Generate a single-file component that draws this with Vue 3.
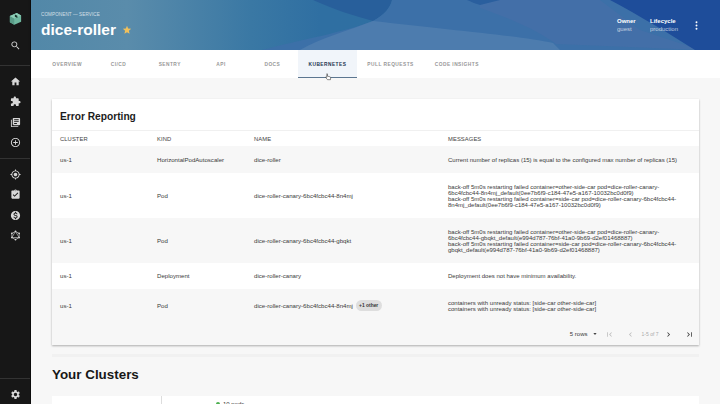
<template>
  <div class="page">
    <nav class="sidebar">
      <div class="logo">
        <svg viewBox="0 0 24 24" width="15" height="15">
          <polygon points="3,8 14,3 21,7 21,17 10,22 3,18" fill="#6fb8a0" />
          <polygon points="3,8 10,12 10,22 3,18" fill="#5a9c88" />
          <polygon points="3,8 14,3 21,7 10,12" fill="#8ccdb6" />
          <polygon points="11,5.5 15,7.5 15,11 11,9" fill="#16352e" />
        </svg>
      </div>
      <button class="side-btn search"><svg viewBox="0 0 24 24"><path :d="icons.search" /></svg></button>
      <div class="side-line"></div>
      <button v-for="name in groupOne" :key="name" class="side-btn"><svg viewBox="0 0 24 24"><path :d="icons[name]" /></svg></button>
      <div class="side-line second"></div>
      <button v-for="name in groupTwo" :key="name" class="side-btn"><svg viewBox="0 0 24 24"><path :d="icons[name]" /></svg></button>
      <button class="side-btn">
        <svg viewBox="0 0 24 24" class="graph">
          <polygon points="12,3 20,7.5 20,16.5 12,21 4,16.5 4,7.5" />
          <polygon points="12,3 20,16.5 4,16.5" />
          <circle cx="12" cy="3" r="1.8" /><circle cx="20" cy="7.5" r="1.8" /><circle cx="20" cy="16.5" r="1.8" />
          <circle cx="12" cy="21" r="1.8" /><circle cx="4" cy="16.5" r="1.8" /><circle cx="4" cy="7.5" r="1.8" />
        </svg>
      </button>
      <div class="side-bottom">
        <div class="side-line"></div>
        <button class="side-btn"><svg viewBox="0 0 24 24"><path :d="icons.settings" /></svg></button>
      </div>
    </nav>

    <main class="main">
      <header class="hero">
        <svg class="hero-bg" viewBox="31 0 689 50" preserveAspectRatio="none">
          <defs>
            <linearGradient id="base" x1="0" x2="1" y1="0" y2="0">
              <stop offset="0" stop-color="#5288a8" />
              <stop offset="0.14" stop-color="#5a8cab" />
              <stop offset="0.32" stop-color="#3a78a4" />
              <stop offset="0.42" stop-color="#2f6fa2" />
              <stop offset="1" stop-color="#2f70a2" />
            </linearGradient>
          </defs>
          <rect x="31" y="0" width="689" height="50" fill="url(#base)" />
          <path d="M313 0 C 335 10 355 16 373 21 C 385 14 390 8 392 0 Z" fill="#285f9b" />
          <path d="M392 0 L 720 0 L 720 50 L 262 50 C 300 40 345 32 373 21 C 385 14 390 8 392 0 Z" fill="#3c70a8" />
          <path d="M373 21 C 450 30 520 36 553 43 L 560 50 L 300 50 C 320 38 350 30 373 21 Z" fill="#4d7cae" />
          <path d="M480 8 C 515 20 540 32 556 44 L 700 50 L 640 30 L 600 0 L 480 0 Z" fill="#436fa8" />
          <path d="M610 0 C 640 16 670 34 695 50 L 720 50 L 720 0 Z" fill="#1e4d9a" />
          <path d="M467 0 C 472 2 476 4 480 5 L 500 0 Z" fill="#2a5f9e" />
        </svg>
        <div class="hero-left">
          <div class="crumb">COMPONENT — SERVICE</div>
          <h1 class="title">dice-roller
            <svg class="star" viewBox="0 0 24 24"><path :d="icons.star" /></svg>
          </h1>
        </div>
        <div class="hero-right">
          <div class="meta"><b>Owner</b><span>guest</span></div>
          <div class="meta"><b>Lifecycle</b><span>production</span></div>
          <svg class="kebab" viewBox="0 0 4 14"><circle cx="2" cy="2" r="1.5" /><circle cx="2" cy="7" r="1.5" /><circle cx="2" cy="12" r="1.5" /></svg>
        </div>
      </header>

      <div class="tabs">
        <div v-for="tab in tabs" :key="tab" :class="['tab', { active: tab === 'KUBERNETES' }]">{{ tab }}</div>
        <svg class="cursor" viewBox="0 0 12 14">
          <path d="M3.2 1.2c.7 0 1 .5 1 1v3.4l4.3 1c.9.2 1.4.8 1.3 1.7l-.4 3.4H4.3L1 7.8c-.4-.6.3-1.3 1-.9l1 .8V2.2c0-.5-.4-1 .2-1z" fill="#fff" stroke="#222" stroke-width="0.9" />
        </svg>
      </div>

      <section class="content">
        <div class="card">
          <h2 class="card-title">Error Reporting</h2>
          <table class="errors">
            <thead>
              <tr>
                <th class="c1">CLUSTER</th>
                <th class="c2">KIND</th>
                <th class="c3">NAME</th>
                <th>MESSAGES</th>
              </tr>
            </thead>
            <tbody>
              <tr v-for="(row, i) in rows" :key="i" :class="{ last: i === rows.length - 1 }" :style="{ height: row.h + 'px' }">
                <td>{{ row.cluster }}</td>
                <td>{{ row.kind }}</td>
                <td>
                  {{ row.name }}
                  <span v-if="row.extra" class="chip">{{ row.extra }}</span>
                </td>
                <td class="msg"><div v-for="line in row.messages" :key="line">{{ line }}</div></td>
              </tr>
            </tbody>
          </table>
          <div class="pager">
            <span class="rows">5 rows</span>
            <svg class="caret" viewBox="0 0 10 5"><path d="M1 0h8L5 5z" /></svg>
            <svg class="pg off first" viewBox="0 0 24 24"><path :d="icons.first" /></svg>
            <svg class="pg off prev" viewBox="0 0 24 24"><path :d="icons.prev" /></svg>
            <span class="count">1-5 of 7</span>
            <svg class="pg next" viewBox="0 0 24 24"><path :d="icons.next" /></svg>
            <svg class="pg last-btn" viewBox="0 0 24 24"><path :d="icons.last" /></svg>
          </div>
        </div>

        <div class="band"></div>
        <h2 class="clusters-title">Your Clusters</h2>
        <div class="cluster-card">
          <div class="cluster-name">us-1</div>
          <div class="cluster-stat"><i class="dot"></i>10 pods</div>
        </div>
      </section>
    </main>
  </div>
</template>

<script setup>
const icons = {
  search: 'M15.5 14h-.79l-.28-.27C15.41 12.59 16 11.11 16 9.5 16 5.91 13.09 3 9.5 3S3 5.91 3 9.5 5.91 16 9.5 16c1.61 0 3.09-.59 4.23-1.57l.27.28v.79l5 4.99L20.49 19l-4.99-5zm-6 0C7.01 14 5 11.99 5 9.5S7.01 5 9.5 5 14 7.01 14 9.5 11.99 14 9.5 14z',
  home: 'M10 20v-6h4v6h5v-8h3L12 3 2 12h3v8z',
  extension: 'M20.5 11H19V7c0-1.1-.9-2-2-2h-4V3.5C13 2.12 11.88 1 10.5 1S8 2.12 8 3.5V5H4c-1.1 0-1.99.9-1.99 2v3.8H3.5c1.49 0 2.7 1.21 2.7 2.7s-1.21 2.7-2.7 2.7H2V20c0 1.1.9 2 2 2h3.8v-1.5c0-1.49 1.21-2.7 2.7-2.7 1.49 0 2.7 1.21 2.7 2.7V22H17c1.1 0 2-.9 2-2v-4h1.5c1.38 0 2.5-1.12 2.5-2.5S21.88 11 20.5 11z',
  books: 'M4 6H2v14c0 1.1.9 2 2 2h14v-2H4V6zm16-4H8c-1.1 0-2 .9-2 2v12c0 1.1.9 2 2 2h12c1.1 0 2-.9 2-2V4c0-1.1-.9-2-2-2zm-1 9H9V9h10v2zm-4 4H9v-2h6v2zm4-8H9V5h10v2z',
  add: 'M13 7h-2v4H7v2h4v4h2v-4h4v-2h-4V7zm-1-5C6.48 2 2 6.48 2 12s4.48 10 10 10 10-4.48 10-10S17.52 2 12 2zm0 18c-4.41 0-8-3.59-8-8s3.59-8 8-8 8 3.59 8 8-3.59 8-8 8z',
  target: 'M12 8c-2.21 0-4 1.79-4 4s1.79 4 4 4 4-1.79 4-4-1.79-4-4-4zm8.94 3c-.46-4.17-3.77-7.48-7.94-7.94V1h-2v2.06C6.83 3.52 3.52 6.83 3.06 11H1v2h2.06c.46 4.17 3.77 7.48 7.94 7.94V23h2v-2.06c4.17-.46 7.48-3.77 7.94-7.94H23v-2h-2.06zM12 19c-3.87 0-7-3.13-7-7s3.13-7 7-7 7 3.13 7 7-3.13 7-7 7z',
  assignment: 'M19 3h-4.18C14.4 1.84 13.3 1 12 1c-1.3 0-2.4.84-2.82 2H5c-1.1 0-2 .9-2 2v14c0 1.1.9 2 2 2h14c1.1 0 2-.9 2-2V5c0-1.1-.9-2-2-2zm-7 0c.55 0 1 .45 1 1s-.45 1-1 1-1-.45-1-1 .45-1 1-1zm-2 14l-4-4 1.41-1.41L10 14.17l6.59-6.59L18 9l-8 8z',
  money: 'M12 2C6.48 2 2 6.48 2 12s4.48 10 10 10 10-4.48 10-10S17.52 2 12 2zm1.41 16.09V20h-2.67v-1.93c-1.71-.36-3.16-1.46-3.27-3.4h1.96c.1 1.05.82 1.87 2.65 1.87 1.96 0 2.4-.98 2.4-1.59 0-.83-.44-1.61-2.67-2.14-2.48-.6-4.18-1.62-4.18-3.67 0-1.72 1.39-2.84 3.11-3.21V4h2.67v1.95c1.86.45 2.79 1.86 2.87 3.39H14.3c-.05-1.11-.64-1.87-2.22-1.87-1.5 0-2.4.68-2.4 1.64 0 .84.65 1.39 2.67 1.91s4.18 1.39 4.18 3.91c-.01 1.83-1.38 2.83-3.12 3.16z',
  settings: 'M19.14 12.94c.04-.3.06-.61.06-.94 0-.32-.02-.64-.07-.94l2.03-1.58c.18-.14.23-.41.12-.61l-1.92-3.32c-.12-.22-.37-.29-.59-.22l-2.39.96c-.5-.38-1.03-.7-1.62-.94l-.36-2.54c-.04-.24-.24-.41-.48-.41h-3.84c-.24 0-.43.17-.47.41l-.36 2.54c-.59.24-1.13.57-1.62.94l-2.39-.96c-.22-.08-.47 0-.59.22L2.74 8.87c-.12.21-.08.47.12.61l2.03 1.58c-.05.3-.09.63-.09.94s.02.64.07.94l-2.03 1.58c-.18.14-.23.41-.12.61l1.92 3.32c.12.22.37.29.59.22l2.39-.96c.5.38 1.03.7 1.62.94l.36 2.54c.05.24.24.41.48.41h3.84c.24 0 .44-.17.47-.41l.36-2.54c.59-.24 1.13-.56 1.62-.94l2.39.96c.22.08.47 0 .59-.22l1.92-3.32c.12-.22.07-.47-.12-.61l-2.01-1.58zM12 15.6c-1.98 0-3.6-1.62-3.6-3.6s1.62-3.6 3.6-3.6 3.6 1.62 3.6 3.6-1.62 3.6-3.6 3.6z',
  star: 'M12 17.27L18.18 21l-1.64-7.03L22 9.24l-7.19-.61L12 2 9.19 8.63 2 9.24l5.46 4.73L5.82 21z',
  first: 'M18.41 16.59L13.82 12l4.59-4.59L17 6l-6 6 6 6zM6 6h2v12H6z',
  prev: 'M15.41 7.41L14 6l-6 6 6 6 1.41-1.41L10.83 12z',
  next: 'M10 6L8.59 7.41 13.17 12l-4.58 4.59L10 18l6-6z',
  last: 'M5.59 7.41L10.18 12l-4.59 4.59L7 18l6-6-6-6zM16 6h2v12h-2z'
}

const groupOne = ['home', 'extension', 'books', 'add']
const groupTwo = ['target', 'assignment', 'money']

const tabs = ['OVERVIEW', 'CI/CD', 'SENTRY', 'API', 'DOCS', 'KUBERNETES', 'PULL REQUESTS', 'CODE INSIGHTS']

const rows = [
  {
    h: 27, cluster: 'us-1', kind: 'HorizontalPodAutoscaler', name: 'dice-roller',
    messages: ['Current number of replicas (15) is equal to the configured max number of replicas (15)']
  },
  {
    h: 45, cluster: 'us-1', kind: 'Pod', name: 'dice-roller-canary-6bc4fcbc44-8n4mj',
    messages: [
      'back-off 5m0s restarting failed container=other-side-car pod=dice-roller-canary-',
      '6bc4fcbc44-8n4mj_default(0ee7b6f9-c184-47e5-a167-10032bc0d0f9)',
      'back-off 5m0s restarting failed container=side-car pod=dice-roller-canary-6bc4fcbc44-',
      '8n4mj_default(0ee7b6f9-c184-47e5-a167-10032bc0d0f9)'
    ]
  },
  {
    h: 45, cluster: 'us-1', kind: 'Pod', name: 'dice-roller-canary-6bc4fcbc44-gbqkt',
    messages: [
      'back-off 5m0s restarting failed container=other-side-car pod=dice-roller-canary-',
      '6bc4fcbc44-gbqkt_default(e994d787-76bf-41a0-9b69-d2ef01468887)',
      'back-off 5m0s restarting failed container=side-car pod=dice-roller-canary-6bc4fcbc44-',
      'gbqkt_default(e994d787-76bf-41a0-9b69-d2ef01468887)'
    ]
  },
  {
    h: 26, cluster: 'us-1', kind: 'Deployment', name: 'dice-roller-canary',
    messages: ['Deployment does not have minimum availability.']
  },
  {
    h: 34, cluster: 'us-1', kind: 'Pod', name: 'dice-roller-canary-6bc4fcbc44-8n4mj', extra: '+1 other',
    messages: ['containers with unready status: [side-car other-side-car]', 'containers with unready status: [side-car other-side-car]']
  }
]
</script>

<style>
html, body {
  margin: 0;
  background: #f7f7f7;
  overflow: hidden;
}
</style>

<style scoped>
.page {
  display: flex;
  width: 720px;
  height: 404px;
  overflow: hidden;
  font-family: "Liberation Sans", Arial, sans-serif;
  color: #2a2a2a;
}

.sidebar {
  flex: 0 0 30px;
  display: flex;
  flex-direction: column;
  align-items: center;
  background: #171717;
  border-right: 1px solid #0c0c0c;
}

.logo {
  height: 37px;
  display: flex;
  align-items: center;
  justify-content: center;
}

.side-btn {
  display: flex;
  align-items: center;
  justify-content: center;
  width: 30px;
  height: 20.3px;
  padding: 0;
  border: 0;
  background: none;
}

.side-btn svg {
  width: 11px;
  height: 11px;
  fill: #d8d8d8;
}

.side-btn.search {
  margin-top: -2px;
}

.side-btn svg.graph {
  fill: none;
  stroke: #d8d8d8;
  stroke-width: 1.4;
}

.graph circle {
  fill: #d8d8d8;
  stroke: none;
}

.side-line {
  width: 100%;
  height: 1px;
  margin: 10px 0 5px;
  background: #333;
}

.side-line.second {
  margin-top: 6px;
}

.side-bottom {
  margin-top: auto;
  width: 100%;
}

.side-bottom .side-line {
  margin: 0 0 5px;
}

.side-bottom .side-btn {
  height: 20px;
}

.main {
  flex: 1;
  min-width: 0;
  display: flex;
  flex-direction: column;
}

.hero {
  position: relative;
  flex: 0 0 50px;
  display: flex;
  justify-content: space-between;
  align-items: center;
  padding: 0 22px 0 10px;
  color: #fff;
  overflow: hidden;
  box-shadow: 0 1px 3px rgba(0, 0, 0, 0.2);
}

.hero-bg {
  position: absolute;
  inset: 0;
  width: 100%;
  height: 100%;
}

.hero-left,
.hero-right {
  position: relative;
}

.crumb {
  font-size: 4.6px;
  letter-spacing: 0.1px;
  opacity: 0.72;
  margin-bottom: 4px;
}

.title {
  display: flex;
  align-items: center;
  margin: 0;
  font-size: 15.5px;
  line-height: 17px;
  font-weight: 700;
}

.star {
  width: 10px;
  height: 10px;
  margin-left: 6px;
  fill: #f0c05c;
}

.hero-right {
  display: flex;
  align-items: center;
}

.meta {
  display: flex;
  flex-direction: column;
  min-width: 33px;
  font-size: 6px;
  line-height: 8px;
}

.meta b {
  font-weight: 700;
}

.meta span {
  opacity: 0.65;
}

.kebab {
  width: 3px;
  height: 9px;
  margin-left: 12px;
  fill: #fff;
}

.tabs {
  position: relative;
  flex: 0 0 28px;
  display: flex;
  padding-left: 10.5px;
  background: #fff;
}

.tab {
  min-width: 30.3px;
  padding: 1px 10.5px 0;
  box-sizing: content-box;
  display: flex;
  align-items: center;
  justify-content: center;
  font-size: 4.85px;
  font-weight: 700;
  letter-spacing: 0.45px;
  color: #979797;
  white-space: nowrap;
}

.tab.active {
  background: #f1f5fa;
  color: #24334f;
  border-bottom: 1px solid #5c7690;
}

.cursor {
  position: absolute;
  left: 294px;
  top: 23px;
  width: 7px;
  height: 8px;
}

.content {
  flex: 1;
  padding: 21px 21px 0;
  background: #f7f7f7;
}

.card {
  background: #fff;
  box-shadow: 0 1px 2px rgba(0, 0, 0, 0.3);
  height: 246px;
  display: flex;
  flex-direction: column;
}

.card-title {
  height: 32px;
  margin: 0;
  padding-left: 8px;
  font-size: 10.2px;
  line-height: 35px;
  font-weight: 700;
  color: #1c1c1c;
  border-bottom: 1px solid #f0f0f0;
  box-sizing: border-box;
}

.errors {
  width: 100%;
  border-collapse: collapse;
  table-layout: fixed;
}

.errors th {
  height: 15px;
  padding: 0 0 0 8px;
  text-align: left;
  font-size: 5.8px;
  font-weight: 400;
  color: #444;
  letter-spacing: 0.1px;
  box-shadow: 0 1px 0 #eee;
}

.errors .c1,
.errors .c2 {
  width: 97px;
  box-sizing: border-box;
}

.errors .c3 {
  width: 194px;
  box-sizing: border-box;
}

.errors td {
  padding: 0 0 0 8px;
  font-size: 6.1px;
  line-height: 6px;
  color: #3a3a3a;
  vertical-align: middle;
  white-space: nowrap;
}

.errors tbody tr:nth-child(odd) {
  background: #f7f7f7;
}

.errors tr.last td {
  vertical-align: top;
  padding-top: 14px;
}

.errors tr.last td.msg {
  padding-top: 11px;
}

.errors td.msg {
  font-size: 6.03px;
}

.chip {
  display: inline-block;
  height: 11px;
  margin: -4px 0 -3px 1px;
  padding: 0 3.5px;
  border-radius: 5.5px;
  background: #dedede;
  font-size: 4.9px;
  line-height: 11px;
  font-weight: 700;
  color: #333;
  vertical-align: 1px;
}

.pager {
  flex: 1;
  display: flex;
  align-items: center;
  justify-content: flex-end;
  background: #f7f7f7;
  font-size: 6px;
  color: #3a3a3a;
  padding-right: 5px;
}

.caret {
  width: 4px;
  height: 2px;
  margin: 0 8.5px 0 5px;
  fill: #444;
}

.pg {
  width: 9px;
  height: 9px;
  fill: #333;
}

.pg.off {
  fill: #bbb;
}

.first {
  margin-right: 12px;
}

.prev {
  margin-right: 6.5px;
}

.count {
  font-size: 5px;
  color: #aaa;
  margin-right: 5.5px;
}

.next {
  margin-right: 12px;
}

.band {
  height: 3px;
  margin-top: 9px;
  background: #f1f1f1;
}

.clusters-title {
  margin: 8px 0 0;
  font-size: 13.4px;
  line-height: 20px;
  font-weight: 700;
  color: #171717;
}

.cluster-card {
  display: flex;
  height: 40px;
  margin-top: 11px;
  background: #fff;
  font-size: 6px;
  line-height: 8px;
  color: #333;
}

.cluster-name {
  width: 110px;
  padding: 6px 0 0 30px;
  box-sizing: border-box;
  border-right: 1px solid #ddd;
}

.cluster-stat {
  padding: 4px 0 0 54px;
}

.dot {
  display: inline-block;
  width: 4px;
  height: 4px;
  margin-right: 3px;
  border-radius: 50%;
  background: #4caf50;
}
</style>
